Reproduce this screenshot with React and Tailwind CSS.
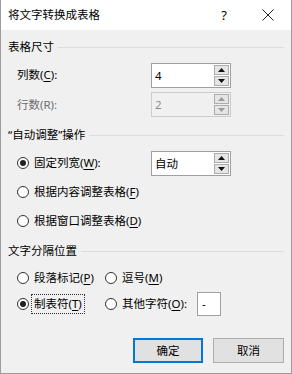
import React from 'react';

const font = { fontFamily: '"Noto Sans", "Noto Sans CJK SC", sans-serif' };

function Key({ k }) {
  return <span className="underline underline-offset-2">{k}</span>;
}

function Radio({ checked }) {
  return (
    <span className="w-[12px] h-[12px] rounded-full border border-[#333333] bg-white flex items-center justify-center shrink-0">
      {checked && <span className="w-[6px] h-[6px] rounded-full bg-[#222222]" />}
    </span>
  );
}

function GroupHead({ children }) {
  return (
    <div className="flex items-center h-[16px]">
      <span className="leading-[16px] text-black">{children}</span>
      <span className="flex-1 h-px bg-[#dcdcdc] ml-[4px] mr-[1px]" />
    </div>
  );
}

function Spin({ value, disabled }) {
  const arrow = disabled ? '#9a9a9a' : '#111111';
  return (
    <div
      className={
        'w-[80px] h-[25px] border flex ' +
        (disabled ? 'border-[#cccccc] bg-[#f0f0f0]' : 'border-[#a0a0a0] bg-white')
      }
    >
      <div className={'flex-1 leading-[23px] pl-[3px] ' + (disabled ? 'text-[#8a8a8a]' : 'text-black')}>
        {value}
      </div>
      <div className="w-[16px] flex flex-col gap-px py-px pr-px">
        <div className="flex-1 border border-[#adadad] bg-[#e5e5e5] flex items-center justify-center">
          <svg width="7" height="4" viewBox="0 0 7 4">
            <path d="M0 4 L3.5 0 L7 4 Z" fill={arrow} />
          </svg>
        </div>
        <div className="flex-1 border border-[#adadad] bg-[#e5e5e5] flex items-center justify-center">
          <svg width="7" height="4" viewBox="0 0 7 4">
            <path d="M0 0 L7 0 L3.5 4 Z" fill={arrow} />
          </svg>
        </div>
      </div>
    </div>
  );
}

export default function App() {
  return (
    <div
      className="w-[292px] h-[374px] flex flex-col border-x border-b border-[#9d9d9d] bg-[#f0f0f0] text-black text-[11.5px]"
      style={font}
    >
      <div className="h-[30px] bg-white flex items-center pl-[7px] shrink-0">
        <span className="leading-[16px] flex-1">将文字转换成表格</span>
        <span className="text-[13px] leading-[16px] w-[10px] mr-[33px] text-center">?</span>
        <svg width="12" height="12" viewBox="0 0 12 12" className="mr-[17px]">
          <path d="M0.5 0.5 L11.5 11.5 M11.5 0.5 L0.5 11.5" stroke="#222" strokeWidth="1" />
        </svg>
      </div>

      <div className="flex-1 flex flex-col pl-[7px] pr-[6px] leading-[16px]">
        <div className="mt-[9px]">
          <GroupHead>表格尺寸</GroupHead>
        </div>

        <div className="mt-[8px] flex items-center h-[24px]">
          <span className="w-[143px] pl-[9px]">
            列数(<Key k="C" />):
          </span>
          <Spin value="4" />
        </div>

        <div className="mt-[5px] flex items-center h-[25px]">
          <span className="w-[143px] pl-[9px] text-[#6d6d6d]">行数(R):</span>
          <Spin value="2" disabled />
        </div>

        <div className="mt-[10px]">
          <GroupHead>“自动调整”操作</GroupHead>
        </div>

        <div className="mt-[8px] flex items-center h-[24px]">
          <div className="w-[143px] pl-[9px] flex items-center gap-[5px]">
            <Radio checked />
            <span>
              固定列宽(<Key k="W" />):
            </span>
          </div>
          <Spin value="自动" />
        </div>

        <div className="mt-[9px] flex items-center h-[16px] pl-[9px] gap-[5px]">
          <Radio />
          <span>
            根据内容调整表格(<Key k="F" />)
          </span>
        </div>

        <div className="mt-[13px] flex items-center h-[16px] pl-[9px] gap-[5px]">
          <Radio />
          <span>
            根据窗口调整表格(<Key k="D" />)
          </span>
        </div>

        <div className="mt-[14px]">
          <GroupHead>文字分隔位置</GroupHead>
        </div>

        <div className="mt-[11px] flex items-center h-[16px] pl-[9px]">
          <div className="w-[88px] flex items-center gap-[5px]">
            <Radio />
            <span>
              段落标记(<Key k="P" />)
            </span>
          </div>
          <div className="flex items-center gap-[5px]">
            <Radio />
            <span>
              逗号(<Key k="M" />)
            </span>
          </div>
        </div>

        <div className="mt-[6px] flex items-center h-[24px] pl-[9px]">
          <div className="w-[88px] flex items-center gap-[2px]">
            <Radio checked />
            <span className="border border-dotted border-[#333333] px-[2px] h-[20px] flex items-center">
              制表符(<Key k="T" />)
            </span>
          </div>
          <div className="flex items-center gap-[5px]">
            <Radio />
            <span>
              其他字符(<Key k="O" />):
            </span>
          </div>
          <div className="ml-[10px] w-[24px] h-[24px] bg-white border border-[#a0a0a0] pl-[4px] leading-[22px]">
            -
          </div>
        </div>

        <div className="mt-[22px] flex justify-end gap-[10px] pr-[1px]">
          <button className="w-[70px] h-[25px] border-2 border-[#0078d7] bg-[#e1e1e1]">确定</button>
          <button className="w-[71px] h-[25px] border border-[#adadad] bg-[#e1e1e1]">取消</button>
        </div>
      </div>
    </div>
  );
}
